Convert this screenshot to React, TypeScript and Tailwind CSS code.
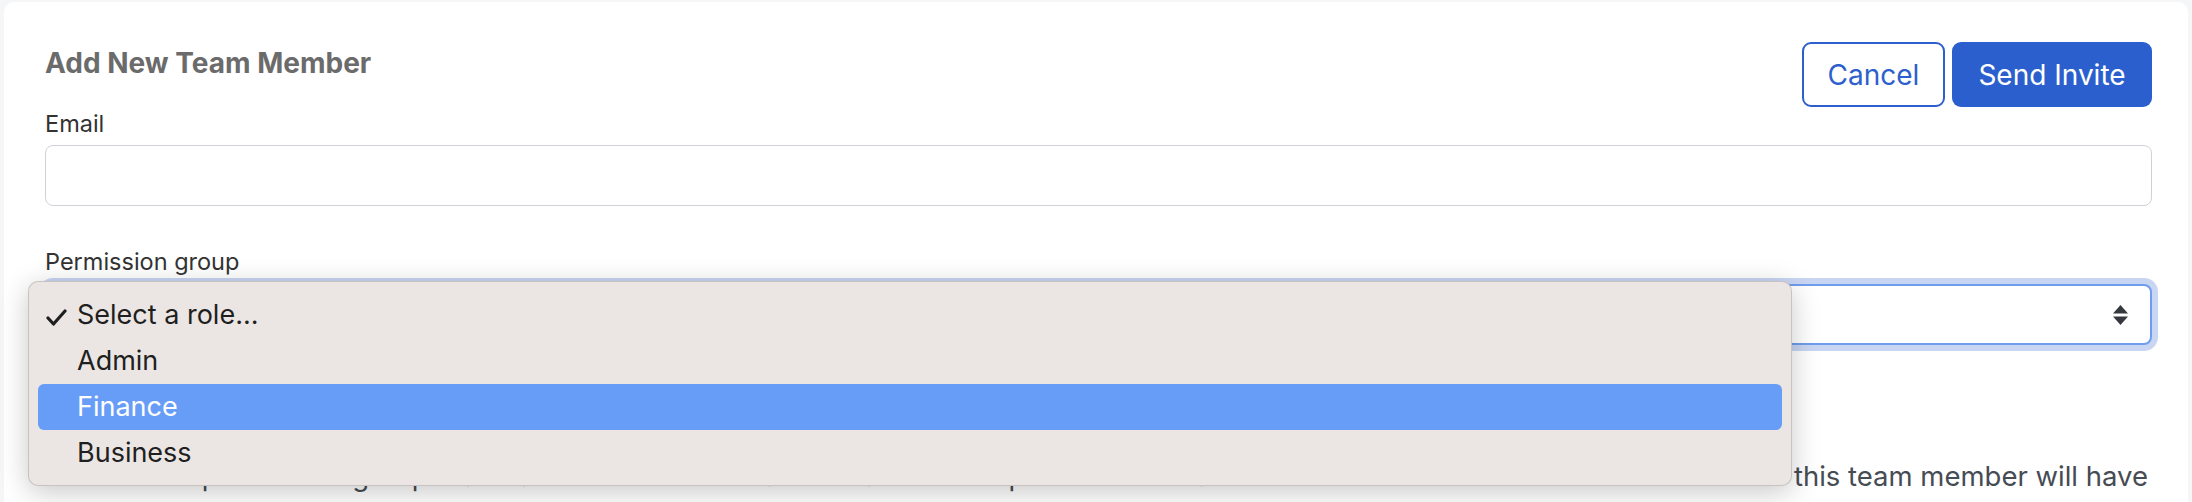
import { useState } from "react";

const roles = ["Select a role...", "Admin", "Finance", "Business"];

function UpDownArrows() {
  return (
    <svg width="15" height="20" viewBox="0 0 15 20" fill="#35383c">
      <path d="M7.5 0 L15 8.5 L0 8.5 Z" />
      <path d="M0 11.5 L15 11.5 L7.5 20 Z" />
    </svg>
  );
}

function Check() {
  return (
    <svg width="21" height="17" viewBox="0 0 21 17" fill="none" stroke="#1f1f1f" strokeWidth="3.2" strokeLinecap="round" strokeLinejoin="round">
      <path d="M2 9 L7.5 15 L19 2" />
    </svg>
  );
}

export default function App() {
  const [email, setEmail] = useState("");
  const [hovered] = useState("Finance");
  const selected = "Select a role...";

  return (
    <div className="relative h-screen overflow-hidden bg-[#f5f6f8] px-[4px] pt-[2px] font-['Inter',sans-serif]">
      <div className="h-[600px] rounded-[10px] bg-white pl-[41px] pr-[36px] pt-[40px]">
        {/* header */}
        <div className="flex items-start justify-between">
          <h2 className="mt-[4px] text-[28px] font-bold leading-[34px] text-[#6b6b6b]">Add New Team Member</h2>
          <div className="flex gap-[7px]">
            <button className="h-[65px] w-[143px] rounded-[9px] border-2 border-[#2d5fcd] bg-white text-[28px] text-[#2d5fcd]">
              Cancel
            </button>
            <button className="h-[65px] w-[200px] rounded-[9px] bg-[#2c5fce] text-[28px] text-white">
              Send Invite
            </button>
          </div>
        </div>

        <label className="mt-[3px] block text-[23.5px] leading-[28px] text-[#333333]">Email</label>
        <input
          value={email}
          onChange={(e) => setEmail(e.target.value)}
          className="mt-[7px] block h-[61px] w-full rounded-[8px] border-[1.5px] border-[#cfd3d8] px-4 text-[22px] outline-none"
        />

        <label className="mt-[42px] block text-[23.5px] leading-[28px] text-[#333333]">Permission group</label>
        <div className="relative mt-[8px] h-[61px] rounded-[8px] border-2 border-[#6f9ded] bg-white ring-[6px] ring-[#c9d6f3]">
          <div className="absolute right-[22px] top-1/2 -translate-y-1/2">
            <UpDownArrows />
          </div>
        </div>

        <p className="mt-[113px] flex whitespace-nowrap pr-[4px] text-[27.5px] leading-[36px] text-[#464c54]">
          <span className="min-w-0 flex-1 overflow-hidden">
            Choose the permission group that matches the level of access and the responsibilities that&nbsp;
          </span>
          <span>this team member will have</span>
        </p>
      </div>

      {/* native select menu, opened */}
      <div className="absolute left-[28px] top-[281px] h-[205px] w-[1764px] rounded-[10px] border border-black/15 bg-[#ebe6e3] pt-[10px] shadow-[0_6px_28px_rgba(0,0,0,0.22)]">
        {roles.map((r) => (
          <div
            key={r}
            className={`relative mx-[9px] flex h-[46px] items-center rounded-[6px] pl-[39px] text-[27px] ${
              r === hovered ? "bg-[#679df6] text-white" : "text-[#1f1f1f]"
            }`}
          >
            {r === selected && (
              <span className="absolute left-[8px] top-[17px]">
                <Check />
              </span>
            )}
            {r}
          </div>
        ))}
      </div>
    </div>
  );
}
